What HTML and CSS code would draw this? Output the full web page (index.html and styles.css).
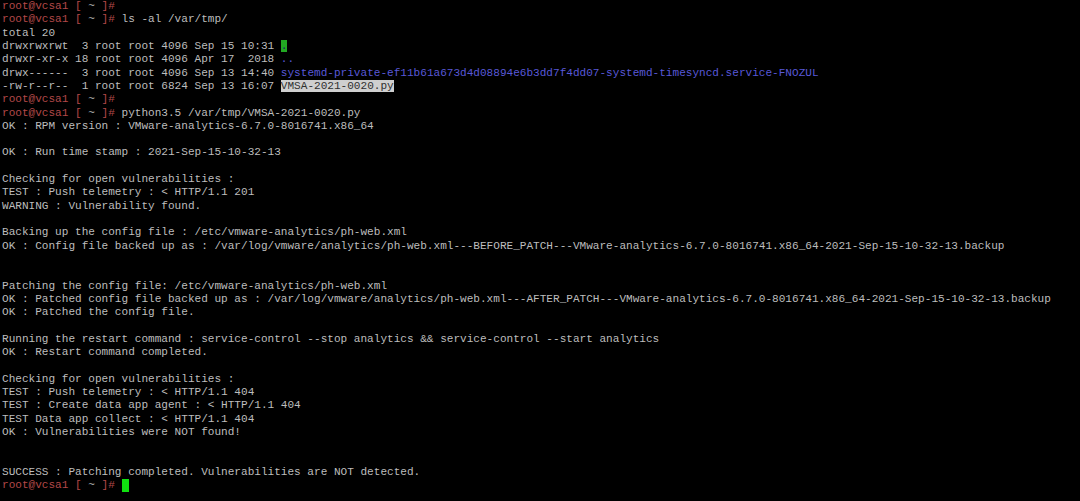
FILE: index.html
```html
<!DOCTYPE html>
<html lang="en">
  <head>
    <meta charset="UTF-8" />
    <meta name="viewport" content="width=device-width, initial-scale=1.0" />
    <title>root@vcsa1</title>
    <link rel="stylesheet" href="styles.css">
  </head>

  <body>
    <pre class="term"><span class="ps">root@vcsa1 [ </span>~<span class="ps"> ]#</span>
<span class="ps">root@vcsa1 [ </span>~<span class="ps"> ]#</span> ls -al /var/tmp/
total 20
drwxrwxrwt  3 root root 4096 Sep 15 10:31 <span class="sticky">.</span>
drwxr-xr-x 18 root root 4096 Apr 17  2018 <span class="dir">..</span>
drwx------  3 root root 4096 Sep 13 14:40 <span class="dir">systemd-private-ef11b61a673d4d08894e6b3dd7f4dd07-systemd-timesyncd.service-FNOZUL</span>
-rw-r--r--  1 root root 6824 Sep 13 16:07 <span class="sel">VMSA-2021-0020.py</span>
<span class="ps">root@vcsa1 [ </span>~<span class="ps"> ]#</span>
<span class="ps">root@vcsa1 [ </span>~<span class="ps"> ]#</span> python3.5 /var/tmp/VMSA-2021-0020.py
OK : RPM version : VMware-analytics-6.7.0-8016741.x86_64

OK : Run time stamp : 2021-Sep-15-10-32-13

Checking for open vulnerabilities :
TEST : Push telemetry : &lt; HTTP/1.1 201
WARNING : Vulnerability found.

Backing up the config file : /etc/vmware-analytics/ph-web.xml
OK : Config file backed up as : /var/log/vmware/analytics/ph-web.xml---BEFORE_PATCH---VMware-analytics-6.7.0-8016741.x86_64-2021-Sep-15-10-32-13.backup


Patching the config file: /etc/vmware-analytics/ph-web.xml
OK : Patched config file backed up as : /var/log/vmware/analytics/ph-web.xml---AFTER_PATCH---VMware-analytics-6.7.0-8016741.x86_64-2021-Sep-15-10-32-13.backup
OK : Patched the config file.

Running the restart command : service-control --stop analytics &amp;&amp; service-control --start analytics
OK : Restart command completed.

Checking for open vulnerabilities :
TEST : Push telemetry : &lt; HTTP/1.1 404
TEST : Create data app agent : &lt; HTTP/1.1 404
TEST Data app collect : &lt; HTTP/1.1 404
OK : Vulnerabilities were NOT found!


SUCCESS : Patching completed. Vulnerabilities are NOT detected.
<span class="ps">root@vcsa1 [ </span>~<span class="ps"> ]#</span> <span class="cursor"> </span></pre>
  </body>
</html>
```

FILE: styles.css
```css
* {
  padding: 0;
  margin: 0;
}

html,
body {
  width: 100%;
  height: 100%;
  background-color: #000;
  overflow: hidden;
}

.term {
  padding: 0 2px;
  font: 11.07px/13.31px "Nimbus Mono PS", "Courier New", "Liberation Mono", monospace;
  color: #bdbdbd;
  white-space: pre;
}

.ps {
  color: #b24848;
}

.dir {
  color: #5858d8;
}

.sticky {
  background-color: #22a822;
  color: #1c1c6c;
}

.sel {
  background-color: #cfcfcf;
  color: #303030;
}

.cursor {
  display: inline-block;
  width: 7px;
  height: 13px;
  vertical-align: top;
  background-color: #10e010;
}
```
